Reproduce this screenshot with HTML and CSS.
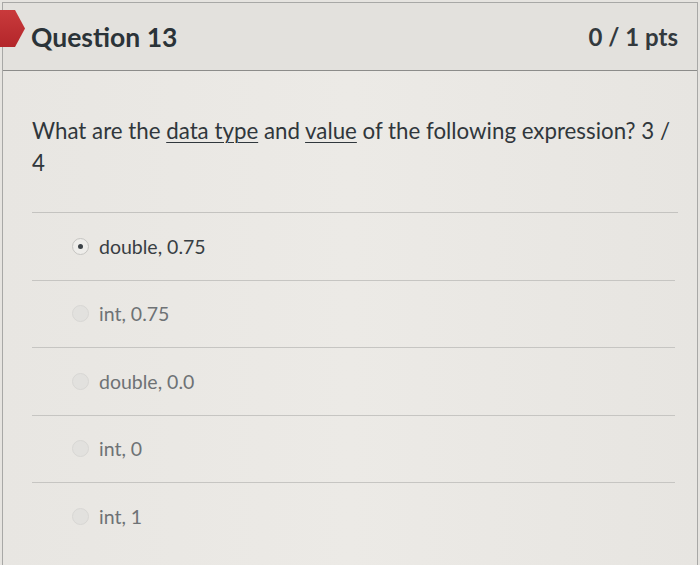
FILE: index.html
```html
<!DOCTYPE html>
<html>
<head>
<meta charset="utf-8">
<link rel="stylesheet" href="styles.css">
</head>
<body>
<div class="card">
  <div class="header">
    <span class="flag"></span>
    <h2 class="title">Question 13</h2>
    <span class="pts">0 / 1 pts</span>
  </div>
  <div class="content">
    <p class="question">What are the <span class="ul">data type</span> and <span class="ul">value</span> of the following expression? 3 / 4</p>
    <div class="answers">
      <div class="answer selected"><span class="radio"></span><span class="label">double, 0.75</span></div>
      <div class="answer"><span class="radio"></span><span class="label">int, 0.75</span></div>
      <div class="answer"><span class="radio"></span><span class="label">double, 0.0</span></div>
      <div class="answer"><span class="radio"></span><span class="label">int, 0</span></div>
      <div class="answer last"><span class="radio"></span><span class="label">int, 1</span></div>
    </div>
  </div>
</div>
</body>
</html>
```
FILE: styles.css
```css
html, body {
  margin: 0;
  padding: 0;
  background: #e6e4e0;
  font-family: Lato, "Open Sans", sans-serif;
  color: #2d3b45;
}
.card {
  margin: 2px 2px 0 2px;
  border: 1px solid #a8a8a6;
  border-bottom: none;
  height: 563px;
  box-sizing: border-box;
  background: linear-gradient(90deg, #e8e6e2, #eceae6 50%, #e7e5e1);
  position: relative;
}
.header {
  height: 67px;
  display: flex;
  align-items: center;
  justify-content: space-between;
  padding: 0 19px 0 28px;
  border-bottom: 1px solid #8c8c8a;
  background: #e3e1dd;
}
.flag {
  position: absolute;
  left: -3px;
  top: 7px;
  width: 25px;
  height: 37px;
  background: linear-gradient(180deg, #c93a3c, #b3262a);
  clip-path: polygon(0 0, 60% 0, 100% 50%, 60% 100%, 0 100%);
}
.title {
  margin: 0;
  font-size: 26.5px;
  font-weight: 700;
  color: #2b3338;
}
.pts {
  font-size: 24px;
  font-weight: 700;
  color: #33393d;
}
.content {
  padding: 44px 22px 0 29px;
}
.question {
  margin: 0;
  font-size: 22.3px;
  line-height: 32px;
  color: #30373c;
  padding-bottom: 33px;
  border-bottom: 1px solid #c4c3c0;
  width: 646px;
  box-sizing: border-box;
}
.ul {
  text-decoration: underline;
  text-decoration-thickness: 1px;
  text-underline-offset: 3px;
}
.answers {
  display: flex;
  flex-direction: column;
}
.answer {
  height: 67.5px;
  display: flex;
  align-items: center;
  padding-left: 40px;
  border-bottom: 1px solid #c6c5c2;
  box-sizing: border-box;
}
.answer.last {
  border-bottom: none;
}
.radio {
  width: 15px;
  height: 15px;
  border-radius: 50%;
  border: 1px solid #d8d7d4;
  background: #e2e1de;
  margin-right: 10px;
  display: flex;
  align-items: center;
  justify-content: center;
}
.selected .radio {
  border-color: #c6c5c2;
  background: #eeedea;
}
.selected .radio::after {
  content: "";
  width: 5px;
  height: 5px;
  border-radius: 50%;
  background: #3b4247;
}
.label {
  font-size: 19.5px;
  color: #6e7275;
}
.selected .label {
  color: #383e43;
}
```
